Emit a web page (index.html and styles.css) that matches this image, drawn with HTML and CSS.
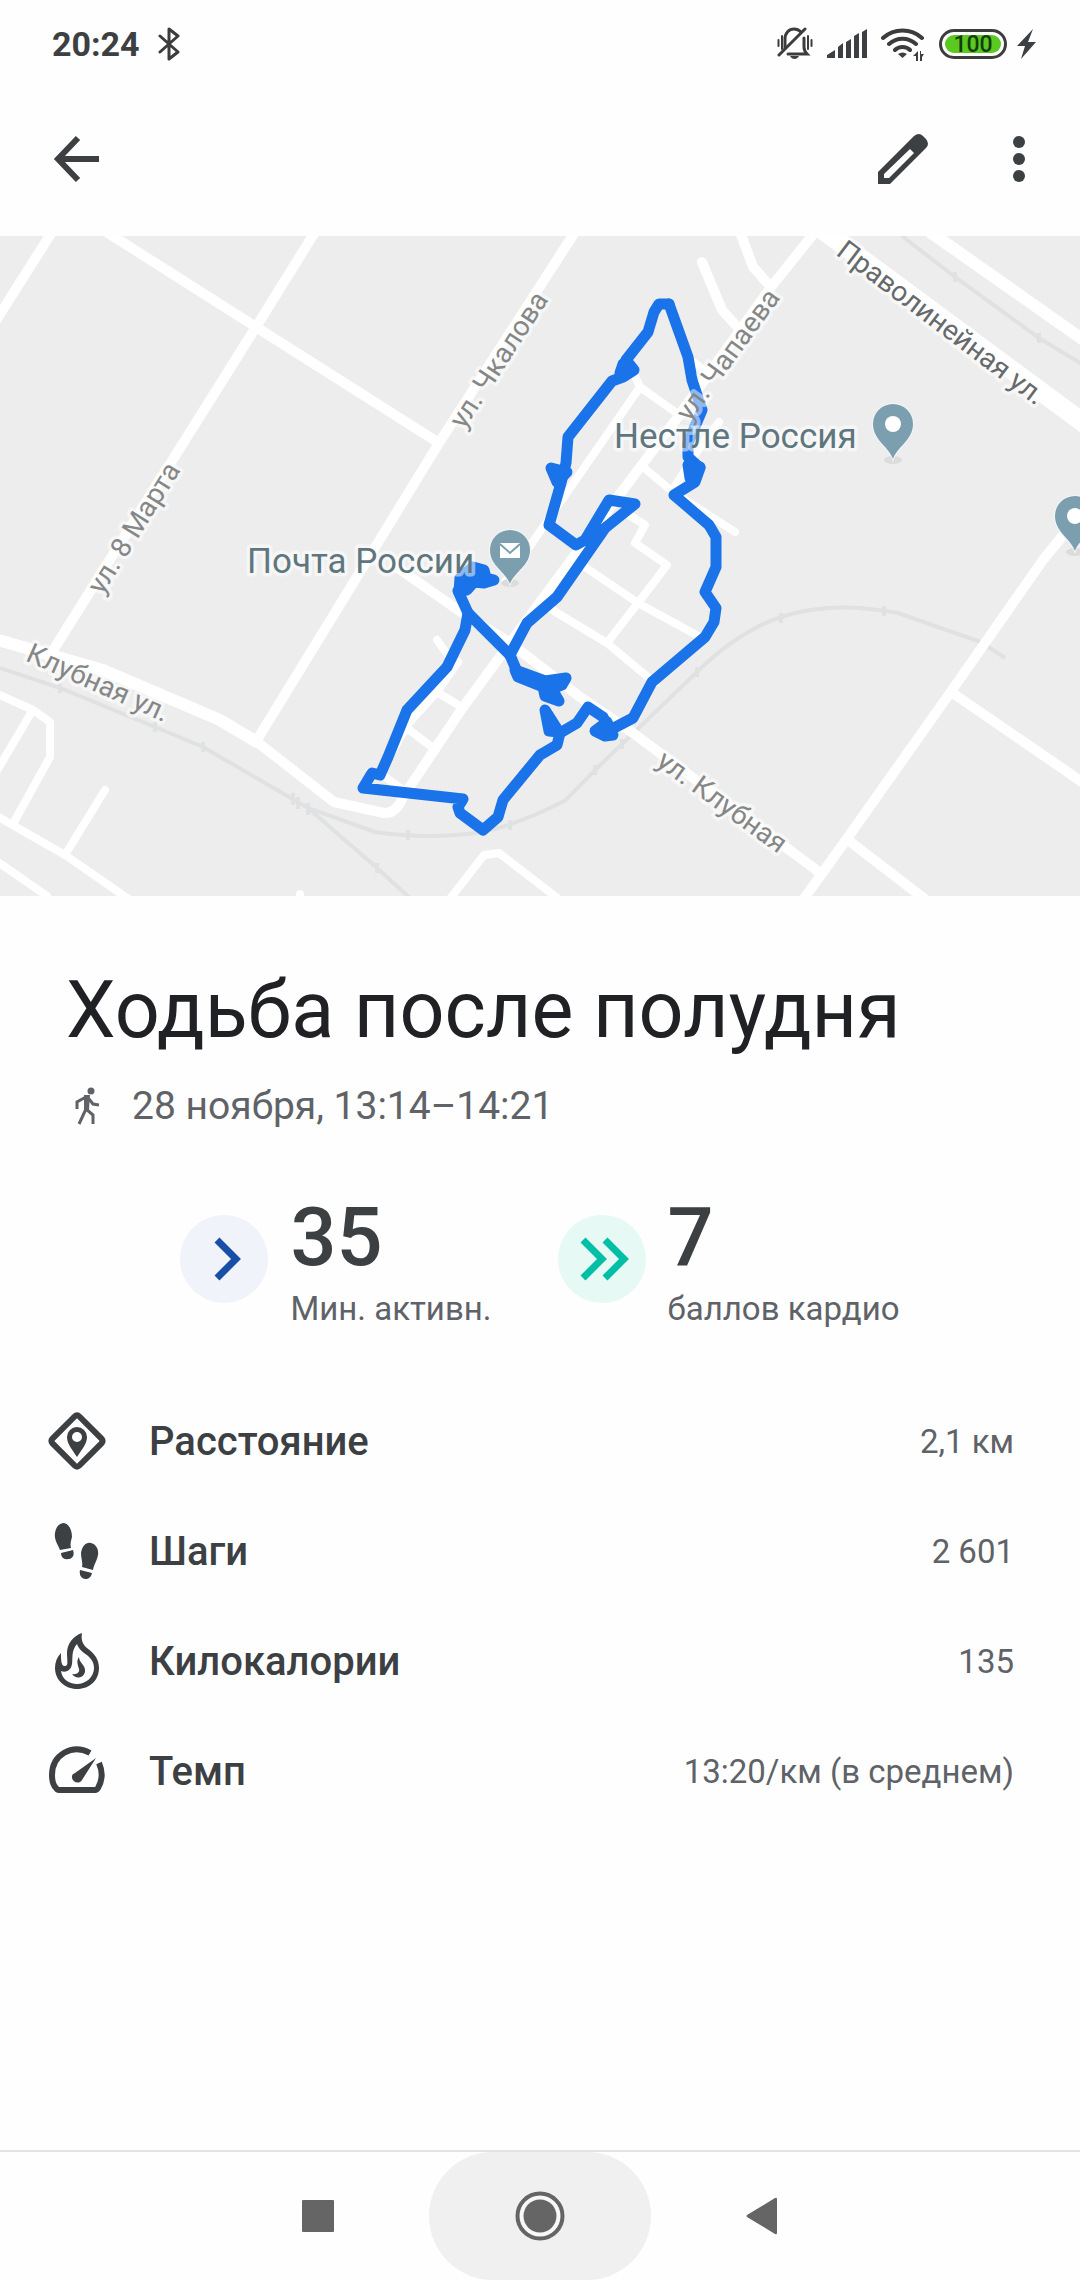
FILE: index.html
```html
<!DOCTYPE html>
<html lang="ru">
<head>
	<meta charset="utf-8">
	<meta name="viewport" content="width=device-width, initial-scale=1">
	<title>Ходьба после полудня</title>
	<link rel="stylesheet" href="styles.css">
</head>
<body>
	<div class="statusbar">
		<span class="clock">20:24</span>
		<svg class="bt" width="22" height="36" viewBox="0 0 22 36"><path d="M2 10 20 26 11 33V3l9 7L2 26"/></svg>
		<div class="status-icons">
			<!-- silent -->
			<svg width="36" height="34" viewBox="0 0 36 34">
				<path class="line" d="M8 21V12C8 6 12 2 17 2c3 0 5 1 7 3M27 11v9c0 3 1 5 3 7H11"/>
				<path class="line" d="M2 28 28 2"/>
				<path class="thin" d="M1.500 13v6M5 9v13M31 9v13M34.500 13v6"/>
				<path d="M13 29h9c-2 4-7 4-9 0z"/>
			</svg>
			<!-- signal -->
			<svg width="40" height="30" viewBox="0 0 40 30">
				<path d="M0 29v-3l8-5v8zM11 29V18l5-4v15zM19 29V13l5-3v19zM27 29V7l5-3v25zM35 29V3l5-3v29z"/>
			</svg>
			<!-- wifi -->
			<svg width="44" height="34" viewBox="0 0 44 34">
				<path class="arc" d="M2 11C13 1 30 1 41 11M8 17c8-7 19-7 27 0M14 23c4-4 11-4 15 0"/>
				<path d="M17 27c3-2 6-2 9 0l-4.500 4zM37 24v10h-2v-5h-3zM39 34V24l1 0v3h3l-2 3v4z"/>
			</svg>
			<span class="battery"><span>100</span></span>
			<svg width="20" height="30" viewBox="0 0 20 30"><path d="M16 0 0 17h8L4 30 19 13h-8z"/></svg>
		</div>
	</div>

	<header class="appbar">
		<button class="icon-btn" title="Назад">
			<svg width="48" height="48" viewBox="0 0 48 48"><path class="arrow" d="M25 3 5 24l20 21M5 24h41"/></svg>
		</button>
		<div class="actions">
			<button class="icon-btn" title="Изменить">
				<svg width="50" height="50" viewBox="0 0 50 50"><path fill-rule="evenodd" d="M0 38 36 2q5-4 9 0l3 3q4 5 0 9L12 50H0zM6 40v4h5L36 19l-4-4z"/></svg>
			</button>
			<button class="icon-btn" title="Ещё">
				<svg width="12" height="50" viewBox="0 0 12 50"><circle cx="6" cy="8" r="6"/><circle cx="6" cy="25" r="6"/><circle cx="6" cy="42" r="6"/></svg>
			</button>
		</div>
	</header>

	<svg class="map" viewBox="0 236 1080 660">
		<rect class="land" y="236" width="1080" height="660"/>
		<!-- railway -->
		<g class="rail">
			<path d="M902 236 955 277 1039 338 1090 369"/>
			<path d="M0 668 60 688 155 727 203 747 308 808 375 832Q430 840 482 832 520 824 566 800L595 770 697 672Q750 620 805 611 845 603 898 613L981 642 1005 658"/>
			<path d="M308 808 377 868 412 900"/>
		</g>
		<path class="ties" d="M955 272v10M1039 333v10M60 683v10M155 722v10M203 742v10M293 793v12M298 797v12M308 803v12M377 863v10M408 830v10M510 820v10M595 765v10M622 739v10M697 667v10M781 613v10M884 606v10"/>
		<!-- roads -->
		<g class="road">
			<path d="M52 232-5 322M108 233 256 327 439 443M315 232 256 327 52 652M575 232 439 443 257 740"/>
			<path d="M395 566 458 610 510 643 580 697 633 733 819 872"/>
			<path d="M815 232 771 287 678 417 614 502 510 643 461 710 403 797Q396 814 384 813L334 802 257 742"/>
			<path d="M740 232 753 267 771 287M702 262 722 310 740 330"/>
			<path d="M1085 508 1043 560 950 693 846 840 803 900M951 692 1085 784M848 840 926 900"/>
		</g>
		<path class="road wide" d="M-5 639 26 648 103 670 220 720 257 742"/>
		<path class="road main" d="M820 228 1085 424"/>
		<path class="road wide" d="M930 232 1085 341"/>
		<g class="road small">
			<path d="M695 363 706 372M632 370 640 387 678 414M640 387 505 582M719 422 698 450 674 488M643 467 673 492 735 532"/>
			<path d="M626 513 645 525 635 543 667 565 638 603 607 643M585 567 638 603 700 637M549 608 607 643 655 683"/>
			<path d="M437 640 447 654 458 662 437 692 408 724 380 773 370 772M437 692 463 708M407 728 433 748M380 773 403 790"/>
			<path d="M-5 693 33 710 50 722V757L14 822M31 713-5 774M-5 815 65 855 130 900M105 790 65 855M-5 860 47 896M300 894v6M449 900 484 855 499 853 560 900"/>
		</g>
		<!-- track -->
		<g class="track">
			<path d="M669 304 659 304 654 312 648 332 626 360 634 370 623 377 612 381 568 437 566 463 561 483 549 525 576 545 585 540 609 500 635 504 605 528 557 597 527 623 510 655 518 674 545 686"/>
			<path d="M669 304 688 357 692 380 702 410 688 443V457L700 468 695 482 674 495 709 525 716 537V567L705 592 716 608 714 622 705 637 652 682 633 718 610 730 603 717 588 707 577 723 560 733 557 745 540 755 503 800 498 817 483 830 460 813 458 807 463 799 363 788 372 773 380 775 388 757 407 710 447 667 465 630 468 613 510 655"/>
			<path d="M468 613 458 591 466 582"/>
		</g>
		<g class="blob">
			<path d="M551 468 567 472 557 482zM623 364 630 370 620 373zM688 465 700 467 690 478z"/>
			<path d="M459 592 460 578 473 567 484 570 486 578 494 580 484 583 474 582 467 590z"/>
			<path d="M515 670 545 681 566 678 562 685 552 689 559 701 545 696 543 687 518 677z"/>
			<path d="M545 710 559 732 549 731zM595 731 605 736 613 735 607 722z"/>
		</g>
		<!-- pins -->
		<ellipse class="shade" cx="510" cy="583" rx="9" ry="4"/>
		<ellipse class="shade" cx="893" cy="460" rx="9" ry="4"/>
		<ellipse class="shade" cx="1075" cy="552" rx="9" ry="4"/>
		<path class="pin" d="M510 584C506 572 490 566 490 550a20 20 0 0 1 40 0C530 566 514 572 510 584z"/>
		<path class="white" d="M500 543h20v15h-20z"/>
		<path class="flap" d="M500 544 510 553 520 544"/>
		<path class="pin" d="M893 459C889 447 873 440 873 424a20 20 0 0 1 40 0C913 440 897 447 893 459z"/>
		<circle class="white" cx="893" cy="424" r="8"/>
		<path class="pin" d="M1075 551C1071 539 1055 532 1055 516a20 20 0 0 1 40 0C1095 532 1079 539 1075 551z"/>
		<circle class="white" cx="1075" cy="516" r="8"/>
		<!-- labels -->
		<text class="place" x="247" y="573">Почта России</text>
		<text class="place" x="614" y="448">Нестле Россия</text>
		<g class="street">
			<text transform="translate(134 528) rotate(-58)" dy="9">ул. 8 Марта</text>
			<text transform="translate(499 360) rotate(-57)" dy="9">ул. Чкалова</text>
			<text transform="translate(728 355) rotate(-54)" dy="9">ул. Чапаева</text>
			<text transform="translate(98 683) rotate(24)" dy="9">Клубная ул.</text>
			<text transform="translate(722 802) rotate(36)" dy="9">ул. Клубная</text>
			<text class="dark" transform="translate(941 323) rotate(37)" dy="9">Праволинейная ул.</text>
		</g>
	</svg>

	<main>
		<h1>Ходьба после полудня</h1>
		<div class="when">
			<svg width="28" height="38" viewBox="0 0 28 38"><circle cx="18" cy="4" r="3.500"/><path class="walk" d="M13 22 6 37M13 22l7 6v9M13 10 4 15v7M16 12l4 5 6 1"/><path d="M11 8h6l-1 15-5 1z"/></svg>
			<span>28 ноября, 13:14–14:21</span>
		</div>

		<div class="scores">
			<div class="score">
				<svg class="blue" width="88" height="88" viewBox="0 0 88 88"><circle cx="44" cy="44" r="44"/><path d="M37 25 56 44 37 63"/></svg>
				<div><b>35</b><span>Мин. активн.</span></div>
			</div>
			<div class="score">
				<svg class="green" width="88" height="88" viewBox="0 0 88 88"><circle cx="44" cy="44" r="44"/><path d="M25 25 44 44 25 63M47 25 66 44 47 63"/></svg>
				<div><b>7</b><span>баллов кардио</span></div>
			</div>
		</div>

		<dl class="stats">
			<div>
				<svg width="58" height="58" viewBox="0 0 58 58"><rect class="frame" x="10" y="10" width="38" height="38" rx="3" transform="rotate(45 29 29)"/><path fill-rule="evenodd" d="M29 45C24 37 19 32 19 25a10 10 0 0 1 20 0c0 7-5 12-10 20zM29 20a5 5 0 1 0 0 10 5 5 0 0 0 0-10z"/></svg>
				<dt>Расстояние</dt><dd>2,1 км</dd>
			</div>
			<div>
				<svg width="58" height="58" viewBox="0 0 58 58"><path d="M12 28C9 21 6 17 7 11 8 4 12 1 16 1c5 1 8 7 8 14-1 4-2 7-1 11zM13 31l12-3c2 6-1 9-5 9-4 1-7-2-7-6zM34 45c1-5-1-8-1-14 1-7 5-11 10-10 4 1 8 5 7 12-1 6-4 9-5 15zM32 48l12 3c-1 4-3 6-7 6-4-1-6-4-5-9z"/></svg>
				<dt>Шаги</dt><dd>2 601</dd>
			</div>
			<div>
				<svg width="58" height="58" viewBox="0 0 58 58"><path fill-rule="evenodd" d="M34 1C33 7 34 12 39 16 46 21 51 27 51 36 51 48 42 57 29 57 17 57 7 48 7 36 7 30 9 25 13 21 13 27 13 33 16 34 21 35 19 29 19 21 19 12 25 4 34 1zM29 12C23 19 25 26 24 32 23 39 17 41 13 39 14 47 21 52 29 52 38 52 46 45 46 36 46 29 42 25 36 21 32 18 30 15 29 12zM31 25C31 31 38 33 37 40 35 47 27 47 24 42 29 43 32 40 31 37 30 33 28 29 31 25z"/></svg>
				<dt>Килокалории</dt><dd>135</dd>
			</div>
			<div>
				<svg width="58" height="58" viewBox="0 0 58 58"><path class="gauge" d="M42 11C24 1 4 13 4 33c0 6 2 11 4 13q1 2 3 2h36q2 0 3-2c4-7 5-16 1-25"/><path d="M48 16 34 38c-3 5-11 2-10-4q0-2 3-3z"/></svg>
				<dt>Темп</dt><dd>13:20/км (в среднем)</dd>
			</div>
		</dl>
	</main>

	<nav class="navbar">
		<button title="Недавние"><svg width="32" height="32" viewBox="0 0 32 32"><rect width="32" height="32" rx="1"/></svg></button>
		<button class="home" title="Домой"><svg width="50" height="50" viewBox="0 0 50 50"><circle class="ring" cx="25" cy="25" r="22.500"/><circle cx="25" cy="25" r="16.500"/></svg></button>
		<button title="Назад"><svg width="32" height="38" viewBox="0 0 32 38"><path d="M1 18 29 1q2-1 2 1v34q0 2-2 1L1 20q-1-1 0-2z"/></svg></button>
	</nav>
</body>
</html>
```
FILE: styles.css
```css
body {
	margin: 0;
	min-height: 100vh;
	display: flex;
	flex-direction: column;
	background-color: #fefefe;
	color: #3c4043;
	font-family: Roboto, sans-serif;
}
svg {
	display: block;
	flex: none;
	fill: #3c4043;
}
button {
	border: 0;
	padding: 0;
	background: none;
	display: flex;
	align-items: center;
	justify-content: center;
}

/* status bar */
.statusbar {
	display: flex;
	align-items: center;
	height: 88px;
	padding: 0 43px 0 52px;
}
.clock {
	font-size: 34px;
	font-weight: 700;
	margin-right: 18px;
}
.bt {
	fill: none;
	stroke: #3c3c3c;
	stroke-width: 3;
	stroke-linejoin: round;
	stroke-linecap: round;
}
.status-icons {
	margin-left: auto;
	display: flex;
	align-items: center;
	gap: 14px;
}
.line, .thin, .arc {
	fill: none;
	stroke: #3c3c3c;
	stroke-width: 3;
	stroke-linecap: round;
}
.thin {
	stroke-width: 2;
}
.arc {
	stroke-width: 4;
}
.battery {
	width: 56px;
	height: 18px;
	padding: 3px;
	margin-right: -4px;
	border: 3px solid #3c3c3c;
	border-radius: 15px;
}
.battery span {
	display: block;
	height: 18px;
	border-radius: 9px;
	background-color: #5bc920;
	color: #143d08;
	font-size: 23px;
	font-weight: 500;
	line-height: 19px;
	text-align: center;
}

/* app bar */
.appbar {
	display: flex;
	align-items: center;
	justify-content: space-between;
	height: 148px;
	padding: 0 55px 6px 53px;
	box-sizing: border-box;
}
.actions {
	display: flex;
	gap: 85px;
}
.arrow {
	fill: none;
	stroke: #3c4043;
	stroke-width: 6;
}

/* map */
.map {
	width: 100%;
	height: auto;
}
.land {
	fill: #ededed;
}
.rail, .ties {
	fill: none;
	stroke: #dfe1e2;
	stroke-width: 4;
}
.road {
	fill: none;
	stroke: #ffffff;
	stroke-width: 10;
	stroke-linecap: round;
	stroke-linejoin: round;
}
.small {
	stroke-width: 8;
}
.wide {
	stroke-width: 12;
}
.main {
	stroke-width: 19;
}
.track, .blob {
	fill: none;
	stroke: #1a73e8;
	stroke-width: 11;
	stroke-linejoin: round;
	stroke-linecap: round;
}
.blob {
	fill: #1a73e8;
}
.shade {
	fill: #dcdcdc;
}
.pin {
	fill: #7b9fae;
	stroke: #f3f6f7;
	stroke-width: 2;
	paint-order: stroke;
}
.white {
	fill: #ffffff;
}
.flap {
	fill: none;
	stroke: #7b9fae;
	stroke-width: 2;
}
.place, .street {
	font-size: 35px;
	fill: #5f767f;
	stroke: rgba(255,255,255,0.5);
	stroke-width: 7;
	stroke-linejoin: round;
	paint-order: stroke;
}
.street {
	font-size: 28px;
	fill: #858787;
	text-anchor: middle;
}
.dark {
	fill: #666a6c;
}

/* activity */
main {
	flex: 1;
	padding: 0 66px;
}
h1 {
	margin: 66px 0 0;
	font-size: 79px;
	line-height: 96px;
	font-weight: 400;
	color: #202124;
}
.when {
	display: flex;
	align-items: center;
	margin: 24px 0 0 7px;
	font-size: 39px;
	line-height: 48px;
	color: #5f6368;
}
.when svg {
	margin-right: 31px;
	fill: #5f6368;
}
.walk {
	fill: none;
	stroke: #5f6368;
	stroke-width: 3;
}
.scores {
	display: flex;
	justify-content: center;
	gap: 66px;
	margin-top: 53px;
}
.score {
	display: flex;
	align-items: center;
	gap: 22px;
}
.score div {
	padding-top: 10px;
}
.score b {
	display: block;
	font-size: 81px;
	line-height: 90px;
	font-weight: 500;
}
.score span {
	display: block;
	font-size: 33px;
	line-height: 52px;
	color: #5f6368;
}
.score path {
	fill: none;
	stroke-width: 7;
}
.blue circle {
	fill: #f0f3fa;
}
.blue path {
	stroke: #174ea6;
}
.green circle {
	fill: #e6f9f5;
}
.green path {
	stroke: #00bfa5;
}

/* stats */
.stats {
	margin: 51px 0 0 -18px;
}
.stats div {
	display: flex;
	align-items: center;
	height: 110px;
}
.frame, .gauge {
	fill: none;
	stroke: #3c4043;
	stroke-width: 6;
}
dt {
	margin-left: 43px;
	font-size: 40px;
	font-weight: 500;
}
dd {
	margin: 0 0 0 auto;
	font-size: 33px;
	color: #5f6368;
}

/* system navigation */
.navbar {
	display: flex;
	justify-content: center;
	height: 128px;
	border-top: 2px solid #e3e3e3;
}
.navbar button {
	width: 222px;
}
.navbar svg {
	fill: #656565;
}
.navbar .ring {
	fill: #f8f8f8;
	stroke: #656565;
	stroke-width: 4;
}
.home {
	border-radius: 64px;
	background-color: #f0f0f0;
}
```
